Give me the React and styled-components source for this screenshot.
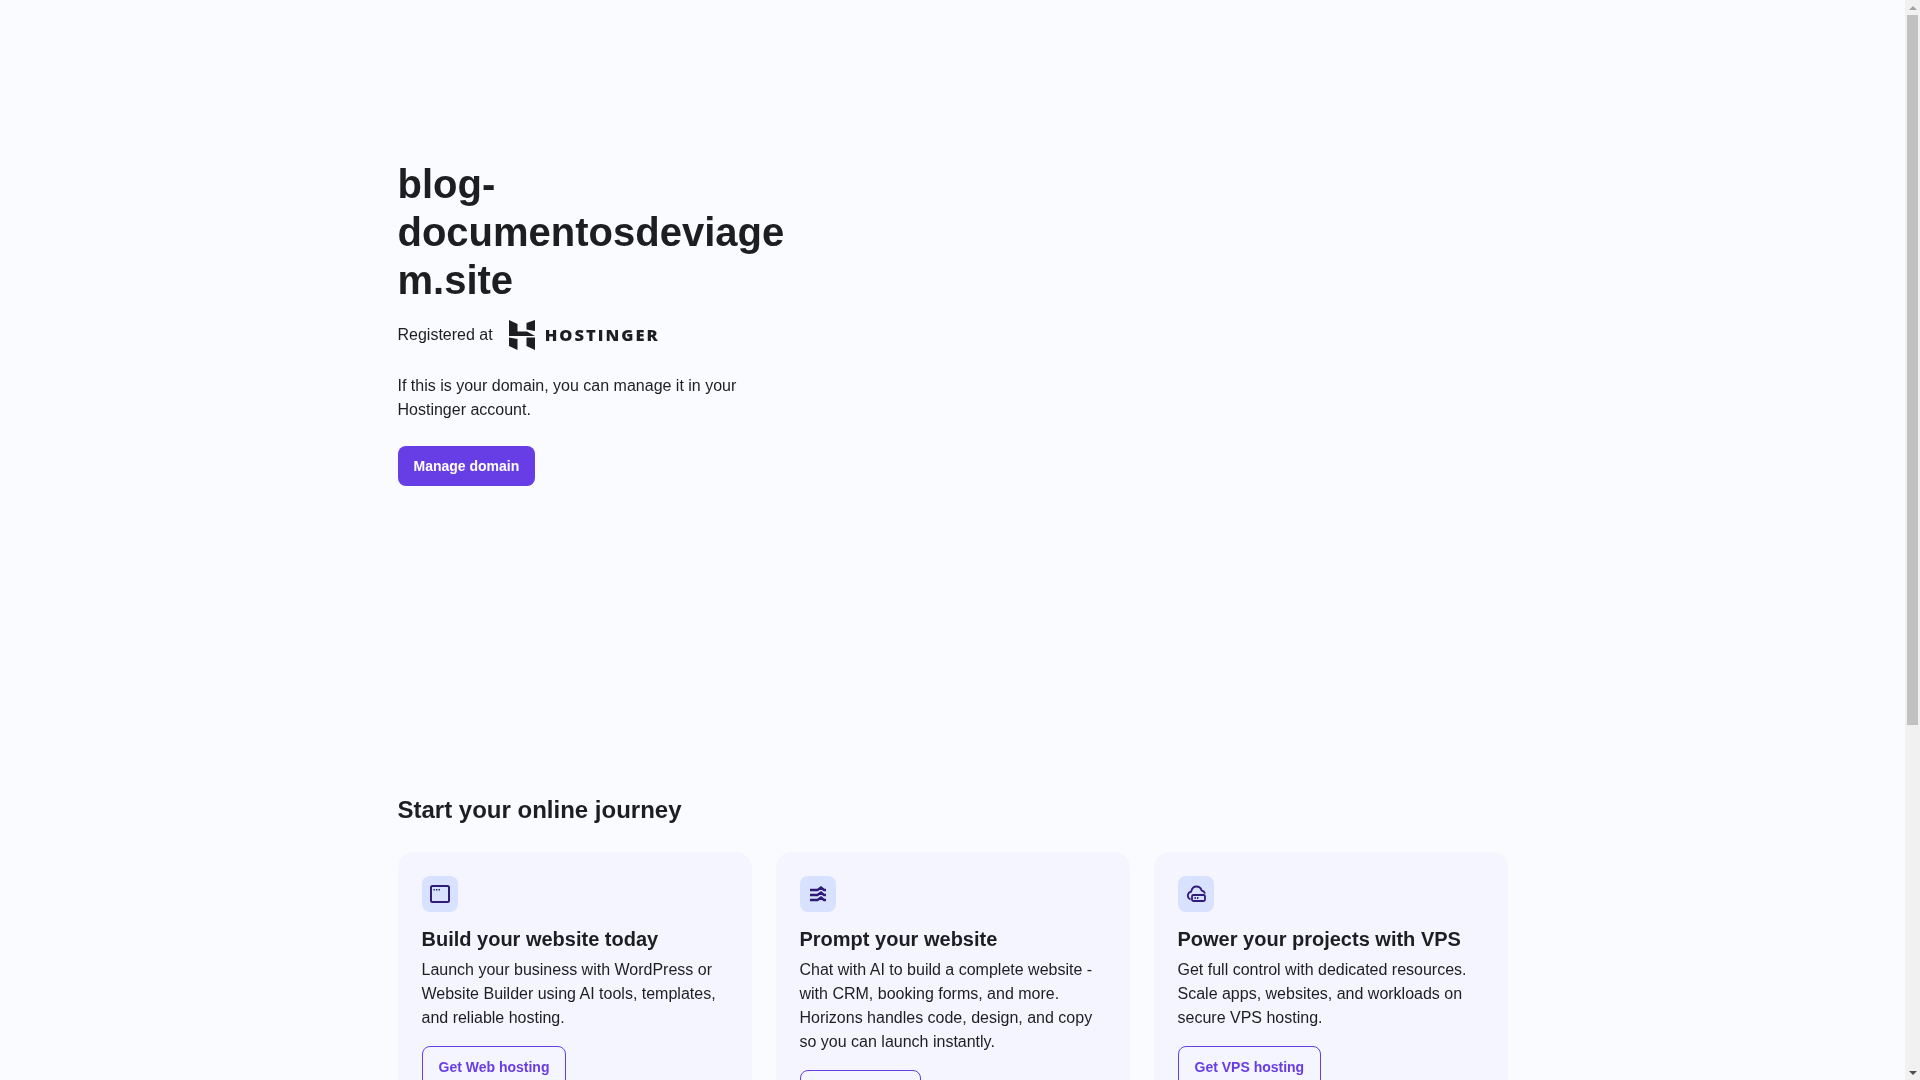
import React from 'react';
import styled, { createGlobalStyle } from 'styled-components';

const GlobalStyle = createGlobalStyle`
  * { box-sizing: border-box; }
  body {
    margin: 0;
    padding-right: 15px;
    background: #fafbff;
    color: #1d1e20;
    font-family: "Liberation Sans", Arial, sans-serif;
    font-size: 16px;
    line-height: 24px;
  }
`;

const Page = styled.div`
  width: 1110px;
  margin: 0 auto;
  padding-bottom: 461px;
  will-change: opacity;
`;

const Hero = styled.section`
  width: 392px;
  padding: 160px 0 308px;
`;

const Domain = styled.h1`
  margin: 0 0 16px;
  font-size: 40px;
  line-height: 48px;
  font-weight: 700;
  overflow-wrap: anywhere;
`;

const Registrar = styled.div`
  display: flex;
  align-items: center;
  gap: 16px;
  height: 30px;
  margin-bottom: 24px;
`;

const Logo = styled.div`
  display: flex;
  align-items: center;
  gap: 10px;
`;

const LogoName = styled.span`
  font-family: "Open Sans", sans-serif;
  font-size: 16.5px;
  line-height: 30px;
  font-weight: 800;
  letter-spacing: 2px;
`;

const Text = styled.p`
  margin: 0 0 ${({ $gap }) => $gap}px;
`;

const Button = styled.a`
  display: inline-flex;
  align-items: center;
  height: ${({ $outline }) => ($outline ? 42 : 40)}px;
  padding: 0 16px;
  border: ${({ $outline }) => ($outline ? '1px solid #673de6' : 'none')};
  border-radius: 8px;
  background: ${({ $outline }) => ($outline ? 'transparent' : '#673de6')};
  color: ${({ $outline }) => ($outline ? '#673de6' : '#fff')};
  font-size: 14px;
  font-weight: 700;
`;

const Heading = styled.h2`
  margin: 0 0 26px;
  font-size: 24px;
  line-height: 32px;
  font-weight: 700;
`;

const Cards = styled.div`
  display: grid;
  grid-template-columns: repeat(3, 1fr);
  gap: 24px;
`;

const Card = styled.article`
  display: flex;
  flex-direction: column;
  align-items: flex-start;
  padding: 24px;
  border-radius: 16px;
  background: #f4f5ff;
`;

const IconBox = styled.div`
  display: flex;
  align-items: center;
  justify-content: center;
  width: 36px;
  height: 36px;
  margin-bottom: 15px;
  border-radius: 8px;
  background: #d8e2ff;
  color: #2f1c7a;
`;

const CardTitle = styled.h3`
  margin: 0 0 7px;
  font-size: 20px;
  line-height: 24px;
  font-weight: 700;
`;

const Scrollbar = styled.div`
  position: fixed;
  top: 0;
  right: 0;
  bottom: 0;
  display: flex;
  flex-direction: column;
  width: 15px;
  background: #f1f1f1;
`;

const ArrowSlot = styled.div`
  display: flex;
  align-items: center;
  justify-content: center;
  flex: none;
  height: 15px;
  margin-top: ${({ $down }) => ($down ? 'auto' : '0')};
`;

const Arrow = styled.span`
  width: 0;
  height: 0;
  border-left: 4px solid transparent;
  border-right: 4px solid transparent;
  border-top: ${({ $down }) => ($down ? '4px solid #505050' : 'none')};
  border-bottom: ${({ $down }) => ($down ? 'none' : '4px solid #a3a3a3')};
`;

const Thumb = styled.div`
  flex: none;
  height: 710px;
  margin: 0 2px;
  background: #c1c1c1;
`;

const WindowIcon = () => (
  <svg width="24" height="24" viewBox="0 0 24 24" fill="none" stroke="currentColor" strokeWidth="2">
    <rect x="3" y="4" width="18" height="16" rx="1.5" />
    <path d="M5.5 7.8h1.4M8 7.8h1.4M10.5 7.8h1.4" strokeWidth="1.6" />
  </svg>
);

const WavesIcon = () => (
  <svg width="24" height="24" viewBox="0 0 24 24" fill="none" stroke="currentColor" strokeWidth="2.3">
    <path d="M4 8h7.5L15 5.5l3 2.5h2" />
    <path d="M4 13h7.5l3.5-2.5 3 2.5h2" />
    <path d="M4 18h7.5l3.5-2.5 3 2.5h2" />
  </svg>
);

const CloudIcon = () => (
  <svg width="24" height="24" viewBox="0 0 24 24" fill="none" stroke="currentColor" strokeWidth="1.8">
    <path d="M6.5 17.5C4.5 16.5 3.5 14.5 4 12.5c.4-1.6 1.7-2.7 3.2-2.9C7.8 6.6 10 4.5 12.5 4.5c2.4 0 4.4 1.6 5.1 3.9 1.7.4 3 1.7 3.3 3.3" />
    <rect x="8" y="13" width="13" height="6" rx="1.5" />
    <path d="M10.5 16h1.4M13 16h1.4" />
  </svg>
);

const cards = [
  {
    title: 'Build your website today',
    text: 'Launch your business with WordPress or Website Builder using AI tools, templates, and reliable hosting.',
    action: 'Get Web hosting',
    icon: <WindowIcon />,
  },
  {
    title: 'Prompt your website',
    text: 'Chat with AI to build a complete website - with CRM, booking forms, and more. Horizons handles code, design, and copy so you can launch instantly.',
    action: 'Get Horizons',
    icon: <WavesIcon />,
  },
  {
    title: 'Power your projects with VPS',
    text: 'Get full control with dedicated resources. Scale apps, websites, and workloads on secure VPS hosting.',
    action: 'Get VPS hosting',
    icon: <CloudIcon />,
  },
];

const App = () => (
  <>
    <GlobalStyle />
    <Page>
      <Hero>
        <Domain>blog-documentosdeviagem.site</Domain>
        <Registrar>
          <span>Registered at</span>
          <Logo>
            <svg width="26" height="30" viewBox="0 0 26 30" fill="#1d1e20">
              <path d="M0 0l8.5 4v7.5H18l8 4.5H0z" />
              <path d="M17.5 3l8.5-3v11l-8.5-1.5z" />
              <path d="M0 17.5l8.5 1.5v11L0 26z" />
              <path d="M17.5 17.5H26V30l-8.5-4z" />
            </svg>
            <LogoName>HOSTINGER</LogoName>
          </Logo>
        </Registrar>
        <Text $gap={24}>If this is your domain, you can manage it in your Hostinger account.</Text>
        <Button>Manage domain</Button>
      </Hero>
      <Heading>Start your online journey</Heading>
      <Cards>
        {cards.map((card) => (
          <Card key={card.title}>
            <IconBox>{card.icon}</IconBox>
            <CardTitle>{card.title}</CardTitle>
            <Text $gap={16}>{card.text}</Text>
            <Button $outline>{card.action}</Button>
          </Card>
        ))}
      </Cards>
    </Page>
    <Scrollbar>
      <ArrowSlot><Arrow /></ArrowSlot>
      <Thumb />
      <ArrowSlot $down><Arrow $down /></ArrowSlot>
    </Scrollbar>
  </>
);

export default App;
